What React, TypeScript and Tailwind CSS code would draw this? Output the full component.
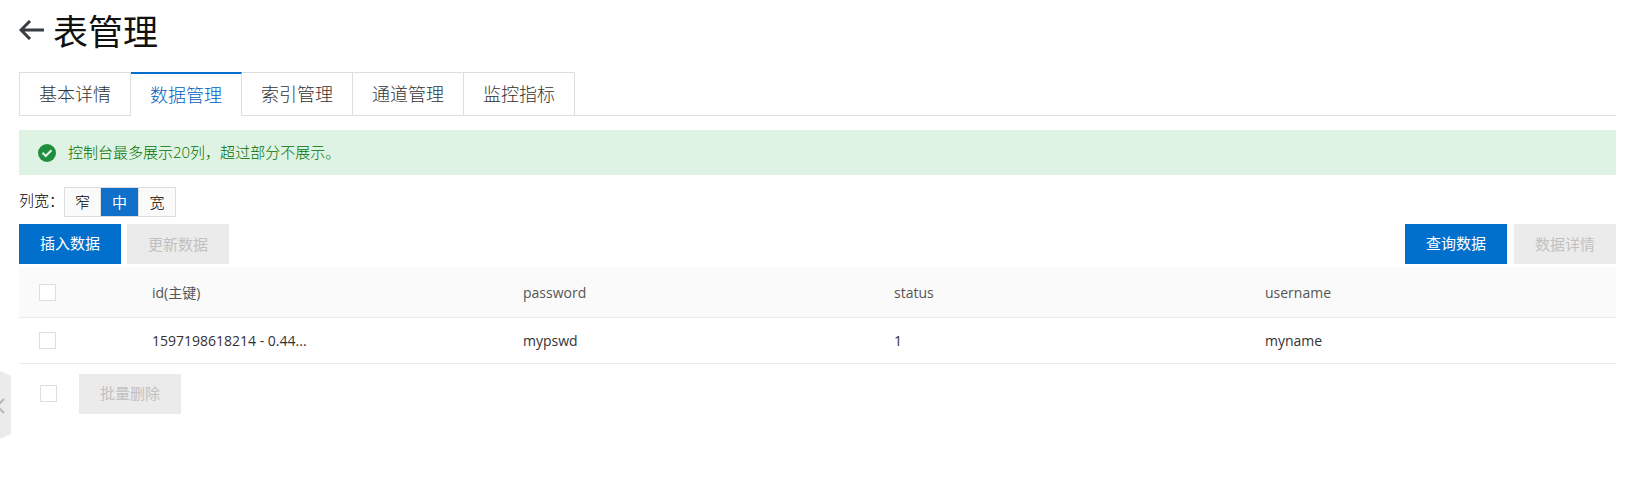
import { useState } from "react";

const tabs = ["基本详情", "数据管理", "索引管理", "通道管理", "监控指标"];
const widths = ["窄", "中", "宽"];
const columns = ["id(主键)", "password", "status", "username"];
const rows = [["1597198618214 - 0.44...", "mypswd", "1", "myname"]];

const primaryButton = "h-10 bg-[#0070cc] px-[21px] pb-px text-[15px] text-white";
const disabledButton = "h-10 bg-[#ebebeb] px-[21px] text-[15px] text-[#c1c1c1]";

function Tick({ label }: { label: string }) {
  return (
    <input
      type="checkbox"
      aria-label={label}
      className="block size-[17px] appearance-none border border-[#dedede] bg-white checked:border-[#0070cc] checked:bg-[#0070cc]"
    />
  );
}

export default function App() {
  const [tab, setTab] = useState(1);
  const [width, setWidth] = useState(1);

  return (
    <main className="relative bg-white pt-2 pr-[21px] pb-18 pl-[19px] font-['Open_Sans','Noto_Sans_CJK_SC',sans-serif] text-[15px] text-[#333]">
      <header className="flex h-12 items-center gap-2">
        <a href="#back" aria-label="返回" className="pb-1 text-[#373d41]">
          <svg viewBox="0 0 26 20" className="h-5 w-[26px]" fill="none" stroke="currentColor" strokeWidth="3">
            <path d="M25 10H2M11 1L2 10l9 9" />
          </svg>
        </a>
        <h1 className="text-[35px] leading-12 text-[#111]">表管理</h1>
      </header>

      <div role="tablist" className="mt-4 flex border-b border-[#dedede]">
        {tabs.map((name, i) => (
          <button
            key={name}
            role="tab"
            aria-selected={i === tab}
            onClick={() => setTab(i)}
            className={
              i === tab
                ? "-mb-px h-11 border-t-2 border-r border-t-[#0070cc] border-r-[#dedede] bg-white px-[19px] text-[18px] font-light text-[#0060c0]"
                : "h-[43px] border-t border-r border-[#dedede] px-[19px] text-[18px] font-light text-[#333] first:border-l"
            }
          >
            {name}
          </button>
        ))}
      </div>

      <div role="status" className="mt-[14px] flex h-[45px] items-center gap-3 bg-[#dff3e4] px-[19px] font-light text-[#007000]">
        <svg viewBox="0 0 18 18" className="size-[18px]">
          <circle cx="9" cy="9" r="9" fill="#1e8e3e" />
          <path d="M4.5 8.8l3.2 3.2 5.8-5.8" fill="none" stroke="#dff3e4" strokeWidth="2.2" />
        </svg>
        <p>控制台最多展示20列，超过部分不展示。</p>
      </div>

      <div className="mt-3 flex h-[30px] items-center font-light text-black">
        <span id="column-width" className="pb-1">列宽：</span>
        <div role="group" aria-labelledby="column-width" className="flex h-[30px] divide-x divide-[#dedede] border border-[#dedede]">
          {widths.map((name, i) => (
            <button
              key={name}
              aria-pressed={i === width}
              onClick={() => setWidth(i)}
              className={i === width ? "w-[38px] bg-[#1070c9] font-normal text-white" : "w-9 bg-[#fafafa] text-black"}
            >
              {name}
            </button>
          ))}
        </div>
      </div>

      <div className="mt-[7px] flex justify-between">
        <div className="flex gap-[6px]">
          <button className={primaryButton}>插入数据</button>
          <button disabled className={disabledButton}>更新数据</button>
        </div>
        <div className="flex gap-[7px]">
          <button className={primaryButton}>查询数据</button>
          <button disabled className={disabledButton}>数据详情</button>
        </div>
      </div>

      <table className="mt-[3px] w-full table-fixed text-left">
        <thead>
          <tr className="h-[50px] border-b border-[#ebebeb] bg-[#fafafa] text-[#555]">
            <th className="w-[113px] pt-px pl-5">
              <Tick label="全选" />
            </th>
            {columns.map((name) => (
              <th key={name} className="pt-px pl-5 text-[14px] font-normal">
                {name}
              </th>
            ))}
          </tr>
        </thead>
        <tbody>
          {rows.map((row) => (
            <tr key={row[0]} className="h-[46px] border-b border-[#ebebeb]">
              <td className="pt-px pl-5">
                <Tick label={row[0]} />
              </td>
              {row.map((cell, i) => (
                <td key={columns[i]} className="truncate pl-5 text-[14px]">
                  {cell}
                </td>
              ))}
            </tr>
          ))}
        </tbody>
      </table>

      <div className="mt-[10px] flex items-center gap-[22px] pl-[21px]">
        <Tick label="选择全部行" />
        <button disabled className={disabledButton}>批量删除</button>
      </div>

      <button aria-label="收起侧栏" className="absolute top-[371px] left-0">
        <svg viewBox="0 0 11 68" className="block h-[68px] w-[11px]">
          <path d="M0 0l11 5v58L0 68z" fill="#ebebeb" />
          <path d="M4 28l-7 7 7 7" fill="none" stroke="#b8b8b8" strokeWidth="2.2" />
        </svg>
      </button>
    </main>
  );
}
